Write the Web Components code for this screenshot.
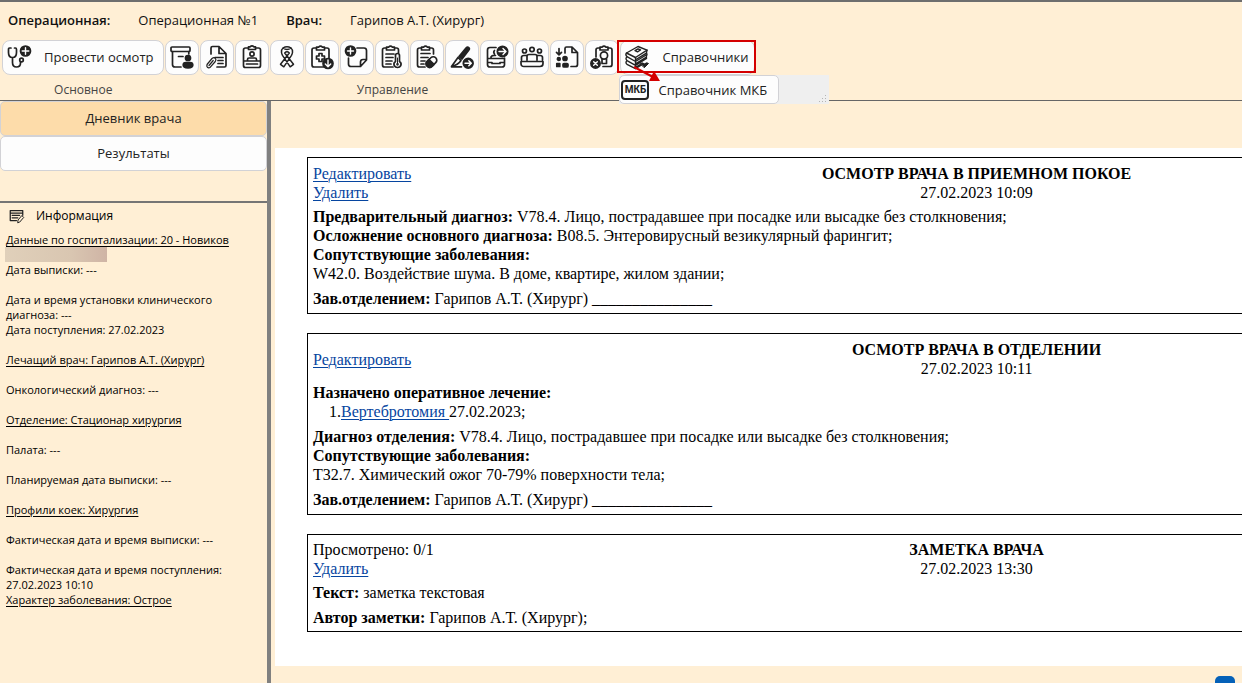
<!DOCTYPE html>
<html lang="ru">
<head>
<meta charset="utf-8">
<title>Операционная №1</title>
<style>
  html, body { height: 100%; margin: 0; }
  body { font-family: "Open Sans", "Noto Sans", sans-serif; overflow: hidden; }
</style>
</head>
<body>
<med-app></med-app>

<script>
const ICONS = {
  stethoscope: `<path d="M4 3H2.600Q1.500 3 1.500 4.500V7.500Q1.500 12.500 5.500 12.500T9.500 7.500V4.500Q9.500 3 8.400 3H7.500M5.500 12.500V17.500Q5.500 22 9.500 22T13.500 18V17"/><circle cx="14.500" cy="15" r="1.800"/><circle class="f" cx="18.500" cy="6" r="5"/><path class="w" d="M18.500 2.700V9.300M15.200 6H21.800"/>`,
  archive: `<rect x="1" y="2" width="19" height="4.500" rx="1"/><path d="M2.500 6.500V19.500Q2.500 22 5 22H11M18.800 6.500V9M8.500 11.500H13"/><circle class="f" cx="18" cy="13" r="2.500"/><path class="f" d="M13.200 20Q13.200 17.500 16 17.500H20Q22.800 17.500 22.800 20Q22.800 22.800 18 22.800T13.200 20Z"/>`,
  attach: `<path d="M6 9V3Q6 1.500 7.500 1.500H14L21 8.500V20.500Q21 22 19.500 22H12M14 1.500V8.500H21M10 12.500H18M13 15.500H18M13 18.500H18M10 12.500"/><path style="stroke-width:1.200" d="M2 19.500L7 13.500Q9 12 10.300 13.300T10.300 16.500L5.300 22.200Q3.700 23.500 2.400 22.300T2.300 19.300M4 20.500L8.200 15.500"/>`,
  badge: `<rect x="3.500" y="3" width="17" height="19.500" rx="2"/><path style="fill:#fdfdfd" d="M8.500 4.500V1.800H10Q12 0 14 1.800H15.500V4.500Z"/><circle cx="12" cy="9" r="2.100"/><path d="M7.500 16V14.500Q7.500 13 9 13H15Q16.500 13 16.500 14.500V16ZM4 16H20M6.500 19H17.500"/>`,
  ribbon: `<path style="stroke-width:1.500" d="M16 3Q17.800 4.500 17.500 7.500Q17.300 9 16.500 10.300L8.800 21.800L5.500 19.300L14.300 8Q12 5.500 9.700 8L18.500 19.300L15.200 21.800L7.500 10.300Q6.700 9 6.500 7.500Q6.200 4.500 8 3Q12 0.300 16 3M8 3Q12 6 16 3"/>`,
  clipdown: `<rect x="2" y="3" width="17" height="19" rx="2"/><path style="fill:#fdfdfd" d="M6.500 5V2.200H8.500Q10.500 0 12.500 2.200H14.500V5Z"/><path d="M9 8.500H12V11H14.500V14H12V16.500H9V14H6.500V11H9Z"/><circle class="f" cx="18" cy="18.500" r="5"/><path class="w" d="M18 15V21.500M15.300 19L18 21.700L20.700 19"/>`,
  noteplus: `<path d="M12 3H19Q21.500 3 21.500 5.500V15L15.500 21.500H6Q3.500 21.500 3.500 19V13M21.500 14.500H18Q15.500 14.500 15.500 17V21.500"/><circle class="f" cx="5.500" cy="6" r="5"/><path class="w" d="M5.500 3V9M2.500 6H8.500"/>`,
  cliptemp: `<path d="M18.500 8V5Q18.500 3 16.500 3H4.500Q2.500 3 2.500 5V20Q2.500 22 4.500 22H13M6 9H14M6 12.500H13M6 16H12M6 19H11"/><path style="fill:#fdfdfd" d="M6.500 5V2.200H8.500Q10.500 0 12.500 2.200H14.500V5Z"/><path style="fill:#fdfdfd" d="M15.500 16.500V10.500Q15.500 8.500 17.500 8.500T19.500 10.500V16.500Q21.800 18 20.800 20.500Q19.800 22.500 17.500 22.500T14.200 20.500Q13.200 18 15.500 16.500Z"/><path style="stroke-width:1" d="M17.500 13V19"/><circle class="f" cx="17.500" cy="19.300" r="0.500"/>`,
  clippill: `<path d="M18.500 9V5Q18.500 3 16.500 3H4.500Q2.500 3 2.500 5V20Q2.500 22 4.500 22H10M6 8.500H15M6 12.500H13M6 16H10M6 19H9"/><path style="fill:#fdfdfd" d="M6.500 5V2.200H8.500Q10.500 0 12.500 2.200H14.500V5Z"/><g transform="rotate(-45 16.500 17)"><rect x="10.500" y="13.500" width="12" height="7" rx="3.500" style="fill:#fdfdfd"/><path class="f" d="M16.500 13.500H14Q10.500 13.500 10.500 17T14 20.500H16.500Z"/></g>`,
  scalpel: `<path class="f" d="M9 11.500L16 3Q17.500 1.500 18.800 2.600T18.700 5.200L12 14Z"/><path d="M8 12.500L1.500 21.500Q8 20 11 15.500M1.500 21.800H11.500M8 12.500L11 15.500"/><circle class="f" cx="18.200" cy="18.200" r="4.900"/><path class="w" d="M15 18.200H21.200M18.800 15.700L21.300 18.200L18.800 20.700"/>`,
  recordgo: `<path d="M11 2.500H5Q2.500 2.500 2.500 5V19.500Q2.500 22 5 22H17Q19.500 22 19.500 19.500V13M2.500 13.500H19.500M2.500 17.500H7M15 17.500H19.500M7 17.500V18.500H15V17.500M6 13V12Q7 10 10.500 10.500M9.500 5.500Q8 7 9.500 9"/><circle class="f" cx="17.500" cy="6.500" r="5.200"/><path class="w" d="M14 6.500H20.800M18 3.500L21 6.500L18 9.500"/>`,
  council: `<circle cx="4.500" cy="6" r="2"/><circle cx="12" cy="4.500" r="2.200"/><circle cx="19.500" cy="6" r="2"/><path d="M1.500 15V12.500Q1.500 10.500 4 10.500H6.500M22.500 15V12.500Q22.500 10.500 20 10.500H17.500M7 15V11.500Q7 9.500 9 9.500H15Q17 9.500 17 11.500V15M1 16.500H23V18.500Q23 21.500 20 21.500H4Q1 21.500 1 18.500Z"/>`,
  transfer: `<path d="M10 8V3.500Q10 2 11.500 2H17L22.500 7.500V19.500Q22.500 21.500 20.500 21.500H16M17 2V7.500H22.500M4 3.500V9.500M1.500 7.300L4 9.800L6.500 7.300"/><circle class="f" cx="3.800" cy="14" r="1.400"/><circle class="f" cx="10" cy="13.500" r="2"/><rect class="f" x="1.800" y="18.500" width="3" height="3"/><rect class="f" x="8" y="18.500" width="5" height="3.500" rx="1"/>`,
  cancelclip: `<path d="M6 12V5Q6 3 8 3H20Q22 3 22 5V19.500Q22 21.500 20 21.500H13"/><path style="fill:#fdfdfd" d="M10 5V2.200H12Q14 0 16 2.200H18V5Z"/><circle cx="14" cy="10.500" r="3.600"/><path d="M12 14V18.500H16.500V14"/><circle class="f" cx="5.500" cy="18.500" r="4.600"/><path class="w" d="M3.700 16.700L7.300 20.300M7.300 16.700L3.700 20.300"/>`,
  books: `<g style="stroke-width:1.400"><path d="M1.500 8L13 1.500L22 5.200L10.500 12.500Z"/><path d="M10 5.600L13 3.900L15.500 5L12.500 6.800Z"/><path d="M1.500 8Q0 9.800 2 11.700L10.500 16.500L22 9.500M10.500 12.500V16.500M22 5.200Q21 7.500 22 9.500M2 11.700Q0 13.500 2 15.600L10.500 20.300L21.500 13.500M10.500 16.500V20.300M22 9.500Q21 11.500 21.500 13.500M2 15.600Q0 17.500 2 19.300L10.500 23.700L16.500 20M10.500 20.300V23.700M11 14.500L21 8.300M11 18.500L21 12.300M11 22L16 19"/></g><path class="f" style="stroke-width:1" d="M15.500 18.500Q17 17 19.500 18.800Q22 17 23.500 18.500L19.500 22.500Z"/>`,
  info: `<path style="stroke-width:2" d="M22 10V2.500H2V18.500H12M2 6.500H22M5 10H17M5 14H14"/><path style="stroke-width:1.600" d="M14 21.500L14.500 17.500L20.500 10.500L23.500 13.500L17.500 20.500Z"/>`
};

class MedIcon extends HTMLElement {
  connectedCallback() {
    this.attachShadow({ mode: 'open' }).innerHTML = `
      <style>
        :host { display: block; flex: none; width: 24px; height: 24px; }
        svg { display: block; width: 100%; height: 100%; overflow: visible; fill: none; stroke: #222; stroke-width: 1.700; stroke-linejoin: round; stroke-linecap: round; }
        .f { fill: #222; }
        .w { stroke: #fff; stroke-width: 1.400; }
      </style>
      <svg viewBox="0 0 24 24" aria-hidden="true">${ICONS[this.getAttribute('name')]}</svg>`;
  }
}
customElements.define('med-icon', MedIcon);

class ToolButton extends HTMLElement {
  connectedCallback() {
    const label = this.getAttribute('label') || '';
    this.attachShadow({ mode: 'open' }).innerHTML = `
      <style>
        :host { display: block; }
        button { display: flex; align-items: center; justify-content: center; gap: 13px; box-sizing: border-box; width: 100%; min-width: 34px; height: 35px; margin: 0; padding: 0 4px 2px;
          border: 1px solid #d2d2d6; border-radius: 8px; background: #fdfdfd; color: #222; font: inherit; font-size: 13px; line-height: 20px; white-space: nowrap; }
        :host([wide]) button { justify-content: flex-start; padding-right: 10px; }
        :host([menu]) button { justify-content: flex-start; padding-right: 5px; }
      </style>
      <button type="button" aria-label="${label}"><med-icon name="${this.getAttribute('icon')}"></med-icon><slot></slot></button>`;
    if (!label) this.shadowRoot.querySelector('button').removeAttribute('aria-label');
  }
}
customElements.define('tool-button', ToolButton);

class ToolGroup extends HTMLElement {
  connectedCallback() {
    this.attachShadow({ mode: 'open' }).innerHTML = `
      <style>
        :host { display: block; position: relative; }
        .row { display: flex; gap: 1px; }
        .name { margin-top: 6px; text-align: center; font-size: 12px; line-height: 18px; color: #444; }
      </style>
      <div class="row"><slot></slot></div>
      <div class="name">${this.getAttribute('name') || ''}</div>
      <slot name="popup"></slot>`;
  }
}
customElements.define('tool-group', ToolGroup);

class RefMenu extends HTMLElement {
  connectedCallback() {
    this.attachShadow({ mode: 'open' }).innerHTML = `
      <style>
        :host { position: absolute; z-index: 2; left: -1px; top: 35px; display: flex; justify-content: space-between; align-items: flex-end; width: 210px; background: #efefef; }
        button { display: flex; align-items: center; gap: 9px; box-sizing: border-box; height: 29px; margin: 0; padding: 0 11px 0 1px; border: 1px solid #d2d2d6; border-radius: 5px;
          background: #fdfdfd; color: #222; font: inherit; font-size: 13px; white-space: nowrap; }
        .mkb { box-sizing: border-box; width: 28px; height: 20px; border: 2px solid #222; border-radius: 4px; font: bold 10px/16px Roboto, sans-serif; text-align: center; }
        svg { display: block; width: 8px; height: 8px; margin: 0 2px 1px; fill: #b5b5b5; }
      </style>
      <button type="button"><span class="mkb">МКБ</span><span>Справочник МКБ</span></button>
      <svg viewBox="0 0 8 8" aria-hidden="true"><path d="M6 0h1v1h-1zM6 3h1v1h-1zM3 3h1v1h-1zM6 6h1v1h-1zM3 6h1v1h-1zM0 6h1v1h-1z"/></svg>`;
  }
}
customElements.define('ref-menu', RefMenu);

class CalloutMark extends HTMLElement {
  connectedCallback() {
    this.attachShadow({ mode: 'open' }).innerHTML = `
      <style>
        :host { position: absolute; z-index: 3; left: -3px; right: -1px; top: 0; height: 33px; box-sizing: border-box; border: 2px solid #d40000; pointer-events: none; }
        svg { position: absolute; left: 14px; top: 25px; width: 28px; height: 16px; overflow: visible; }
      </style>
      <svg viewBox="0 0 28 16" aria-hidden="true"><path d="M1 0L20 10" stroke="#d40000" stroke-width="2"/><path d="M21 4L27 14L16 14Z" fill="#d40000"/></svg>`;
  }
}
customElements.define('callout-mark', CalloutMark);

class MedHeader extends HTMLElement {
  connectedCallback() {
    const tools = [['archive', 'Архив'], ['attach', 'Вложения'], ['badge', 'Карта пациента'], ['ribbon', 'Онкология'], ['clipdown', 'Назначения'], ['noteplus', 'Добавить заметку'],
      ['cliptemp', 'Температурный лист'], ['clippill', 'Лекарства'], ['scalpel', 'Операция'], ['recordgo', 'Перевод'], ['council', 'Консилиум'], ['transfer', 'Передача'], ['cancelclip', 'Отмена']];
    this.attachShadow({ mode: 'open' }).innerHTML = `
      <style>
        :host { display: block; box-sizing: border-box; border-top: 2px solid #6e6e6e; border-bottom: 1px solid #666; background: #ffefd5; color: #111; }
        .who { display: flex; gap: 28px; padding: 8px 8px 0; font-size: 13px; line-height: 20px; white-space: nowrap; }
        b { font-weight: 600; }
        .tools { display: flex; gap: 1px; padding: 10px 2px 1px; }
      </style>
      <div class="who"><b>Операционная:</b><span>Операционная №1</span><b>Врач:</b><span>Гарипов А.Т. (Хирург)</span></div>
      <div class="tools">
        <tool-group name="Основное"><tool-button wide icon="stethoscope">Провести осмотр</tool-button></tool-group>
        <tool-group name="Управление">${tools.map(([i, l]) => `<tool-button icon="${i}" label="${l}"></tool-button>`).join('')}</tool-group>
        <tool-group><tool-button menu icon="books">Справочники</tool-button><ref-menu slot="popup"></ref-menu><callout-mark slot="popup"></callout-mark></tool-group>
      </div>`;
  }
}
customElements.define('med-header', MedHeader);

class PatientInfo extends HTMLElement {
  connectedCallback() {
    this.attachShadow({ mode: 'open' }).innerHTML = `
      <style>
        :host { display: block; padding: 4px 6px; color: #000; font: 11px/15px "Open Sans", "Noto Sans", sans-serif; }
        h2 { display: flex; align-items: center; gap: 12px; margin: 0 0 7px; padding-left: 3px; font: 12px/18px "Open Sans", sans-serif; }
        med-icon { width: 15px; height: 15px; }
        p { margin: 0 0 15px; }
        p.tight { margin: 0; }
        a { color: inherit; text-decoration: underline; text-underline-offset: 2px; }
        .hidden-name { display: block; width: 102px; height: 15px; margin-left: -1px; background: linear-gradient(90deg, #e0d0ba, #d9c6b1 65%, #cfb4a5); }
      </style>
      <h2><med-icon name="info"></med-icon>Информация</h2>
      <p class="tight"><a href="#">Данные по госпитализации: 20 - Новиков<span class="hidden-name"></span></a></p>
      <p>Дата выписки: ---</p>
      <p class="tight">Дата и время установки клинического<br>диагноза: ---</p>
      <p>Дата поступления: 27.02.2023</p>
      <p><a href="#">Лечащий врач: Гарипов А.Т. (Хирург)</a></p>
      <p>Онкологический диагноз: ---</p>
      <p><a href="#">Отделение: Стационар хирургия</a></p>
      <p>Палата: ---</p>
      <p>Планируемая дата выписки: ---</p>
      <p><a href="#">Профили коек: Хирургия</a></p>
      <p>Фактическая дата и время выписки: ---</p>
      <p class="tight">Фактическая дата и время поступления:<br>27.02.2023 10:10</p>
      <p><a href="#">Характер заболевания: Острое</a></p>`;
  }
}
customElements.define('patient-info', PatientInfo);

class SideBar extends HTMLElement {
  connectedCallback() {
    this.attachShadow({ mode: 'open' }).innerHTML = `
      <style>
        :host { display: block; box-sizing: border-box; background: #ffefd5; border-right: 4px solid #808080; }
        nav { display: flex; flex-direction: column; padding-bottom: 30px; border-bottom: 2px solid #757575; }
        button { height: 35px; margin: 0; padding: 0 4px 2px; border: 1px solid #d2d2d6; border-radius: 5px; background: #fdfdfd; color: #222; font: inherit; font-size: 13px; }
        button[aria-current] { background: #fddcaa; }
      </style>
      <nav><button type="button" aria-current="page">Дневник врача</button><button type="button">Результаты</button></nav>
      <patient-info></patient-info>`;
  }
}
customElements.define('side-bar', SideBar);

class DiaryEntry extends HTMLElement {
  connectedCallback() {
    this.attachShadow({ mode: 'open' }).innerHTML = `
      <style>
        :host { display: flex; flex-direction: column; gap: 6px; padding: 6px 0 5px 5px; border: 1px solid #000; border-right: 0; background: #fff; }
        :host([compact]) { padding-top: 5px; padding-bottom: 4px; }
        header { display: grid; grid-template-columns: 3fr 4fr; align-items: center; margin-bottom: -1px; }
        .title { text-align: center; }
        h3 { margin: 0; font-size: inherit; }
        ::slotted(*) { margin: 0; }
      </style>
      <header><div><slot name="actions"></slot></div><div class="title"><h3>${this.getAttribute('heading')}</h3><time>${this.getAttribute('date')}</time></div></header>
      <slot></slot>`;
  }
}
customElements.define('diary-entry', DiaryEntry);

class DiaryPage extends HTMLElement {
  connectedCallback() {
    this.attachShadow({ mode: 'open' }).innerHTML = `
      <style>
        :host { display: flex; flex-direction: column; padding: 47px 0 17px 4px; background: #ffefd5; }
        .sheet { flex: 1; display: flex; flex-direction: column; gap: 19px; padding: 9px 0 9px 32px; background: #fff; color: #000; font: 16px/19px "Liberation Serif", serif; }
        a { color: #0645a0; text-underline-offset: 2px; text-decoration-thickness: 1px; }
        ol { margin: 0; padding-left: 16px; list-style: none; }
        .act a { display: table; }
      </style>
      <div class="sheet">
        <diary-entry heading="ОСМОТР ВРАЧА В ПРИЕМНОМ ПОКОЕ" date="27.02.2023 10:09">
          <div class="act" slot="actions"><a href="#">Редактировать</a><a href="#">Удалить</a></div>
          <div><b>Предварительный диагноз:</b> V78.4. Лицо, пострадавшее при посадке или высадке без столкновения;<br><b>Осложнение основного диагноза:</b> B08.5. Энтеровирусный везикулярный фарингит;<br><b>Сопутствующие заболевания:</b><br>W42.0. Воздействие шума. В доме, квартире, жилом здании;</div>
          <div><b>Зав.отделением:</b> Гарипов А.Т. (Хирург) _______________</div>
        </diary-entry>
        <diary-entry heading="ОСМОТР ВРАЧА В ОТДЕЛЕНИИ" date="27.02.2023 10:11">
          <div class="act" slot="actions"><a href="#">Редактировать</a></div>
          <div><b>Назначено оперативное лечение:</b><ol><li>1.<a href="#">Вертебротомия </a>27.02.2023;</li></ol></div>
          <div><b>Диагноз отделения:</b> V78.4. Лицо, пострадавшее при посадке или высадке без столкновения;<br><b>Сопутствующие заболевания:</b><br>T32.7. Химический ожог 70-79% поверхности тела;</div>
          <div><b>Зав.отделением:</b> Гарипов А.Т. (Хирург) _______________</div>
        </diary-entry>
        <diary-entry compact heading="ЗАМЕТКА ВРАЧА" date="27.02.2023 13:30">
          <div class="act" slot="actions">Просмотрено: 0/1<a href="#">Удалить</a></div>
          <div><b>Текст:</b> заметка текстовая</div>
          <div><b>Автор заметки:</b> Гарипов А.Т. (Хирург);</div>
        </diary-entry>
      </div>`;
  }
}
customElements.define('diary-page', DiaryPage);

class MedApp extends HTMLElement {
  connectedCallback() {
    this.attachShadow({ mode: 'open' }).innerHTML = `
      <style>
        :host { display: grid; grid-template-rows: auto 1fr; min-height: 100vh; background: #ffefd5; }
        .body { display: grid; grid-template-columns: 271px 1fr; }
        .widget { position: fixed; right: 7px; bottom: 0; width: 20px; height: 7px; border: 0; padding: 0; border-radius: 5px 5px 0 0; background: #0561b8; }
      </style>
      <med-header></med-header>
      <div class="body"><side-bar></side-bar><diary-page></diary-page></div>
      <button class="widget" type="button" aria-label="Чат"></button>`;
  }
}
customElements.define('med-app', MedApp);
</script>
</body>
</html>
